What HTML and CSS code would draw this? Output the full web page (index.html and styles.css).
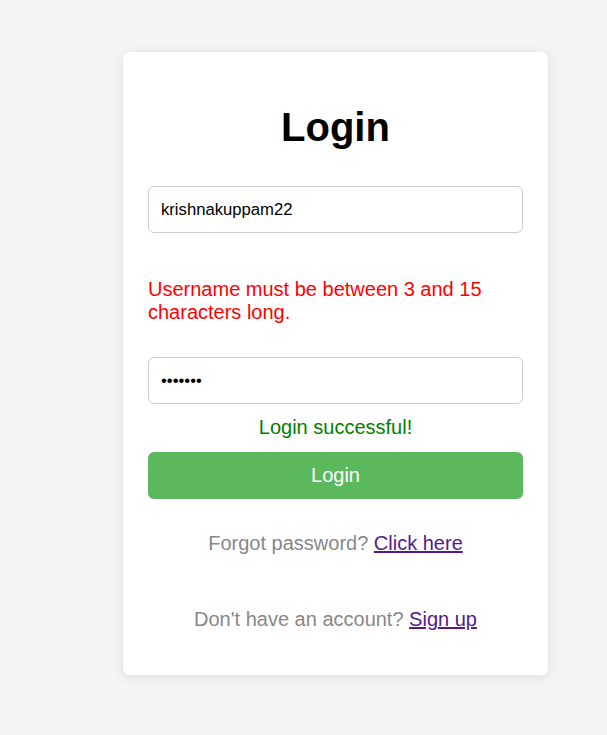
FILE: index.html
```html
<!DOCTYPE html>
<html lang="en">
<head>
<meta charset="utf-8">
<title>Login</title>
<link rel="stylesheet" href="styles.css">
</head>
<body>
<div class="page">
  <form class="card" onsubmit="return false">
    <h1 class="title">Login</h1>
    <input class="field" type="text" value="krishnakuppam22">
    <p class="error">Username must be between 3 and 15 characters long.</p>
    <input class="field field-pass" type="password" value="1234567">
    <p class="success">Login successful!</p>
    <button class="btn" type="submit">Login</button>
    <p class="note note-forgot">Forgot password? <a class="link" href="#">Click here</a></p>
    <p class="note note-signup">Don't have an account? <a class="link" href="#">Sign up</a></p>
  </form>
</div>
</body>
</html>
```
FILE: styles.css
```css
* { box-sizing: border-box; }
html, body { margin: 0; padding: 0; }
body {
  background: #f4f4f4;
  font-family: "Liberation Sans", Arial, sans-serif;
}
.page {
  display: flex;
  padding: 52px 0 0 123px;
  min-height: 735px;
}
.card {
  width: 425px;
  padding: 25px 25px 25px;
  background: #fff;
  border-radius: 7px;
  box-shadow: 0 2px 12px rgba(0,0,0,0.09);
  display: flex;
  flex-direction: column;
  align-self: flex-start;
}
.title {
  margin: 27px 0 36px;
  font-size: 40px;
  line-height: 46px;
  font-weight: bold;
  text-align: center;
  color: #000;
}
.field {
  display: block;
  width: 100%;
  height: 47px;
  margin: 0;
  padding: 0 12px;
  border: 1px solid #ccc;
  border-radius: 6px;
  font-family: "Liberation Sans", Arial, sans-serif;
  font-size: 16.67px;
  color: #000;
  background: #fff;
  outline: none;
}
.error {
  margin: 45px 0 33px;
  font-size: 20px;
  line-height: 23px;
  color: #ff0000;
}
.success {
  margin: 12px 0 13px;
  font-size: 20px;
  line-height: 23px;
  color: #008000;
  text-align: center;
}
.btn {
  display: block;
  width: 100%;
  height: 47px;
  padding: 0;
  border: none;
  border-radius: 6px;
  background: #5cb85c;
  color: #fff;
  font-family: "Liberation Sans", Arial, sans-serif;
  font-size: 20px;
  line-height: 23px;
  cursor: pointer;
}
.note {
  margin: 0;
  font-size: 20px;
  line-height: 23px;
  color: #888;
  text-align: center;
}
.note-forgot { margin-top: 33px; }
.note-signup { margin-top: 53px; margin-bottom: 19px; }
.link { color: #551a8b; text-decoration: underline; }
```
